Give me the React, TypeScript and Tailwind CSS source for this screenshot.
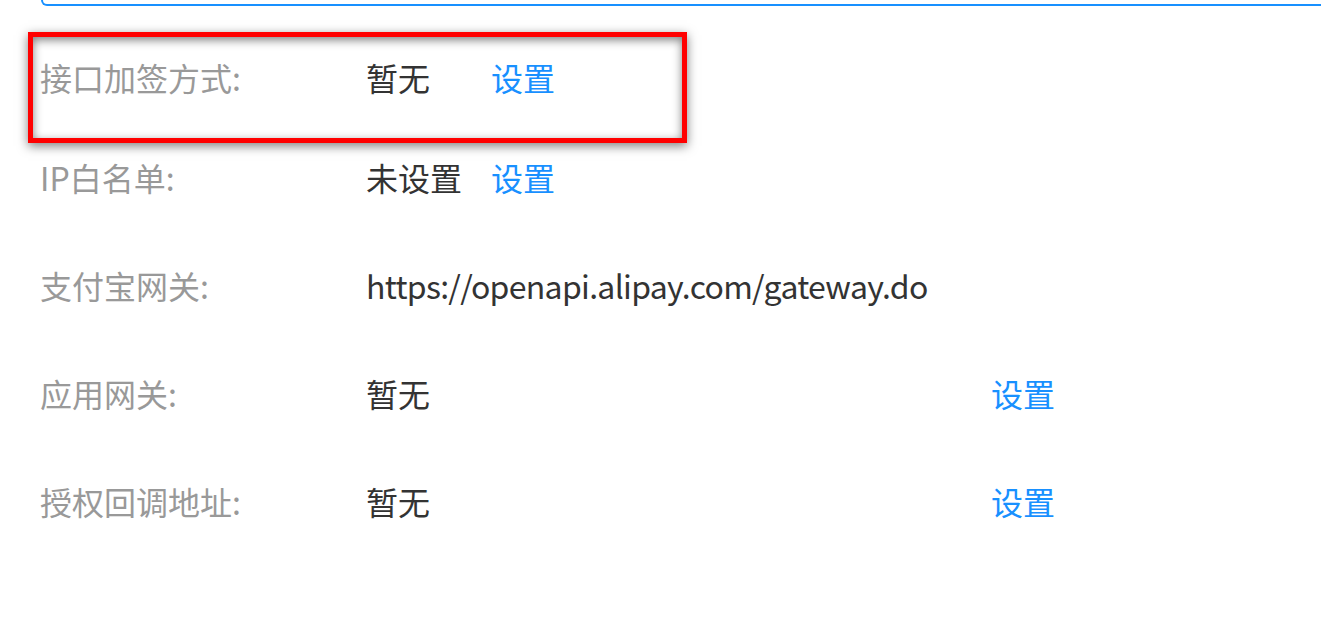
import React from "react";

const font = { fontFamily: '"Noto Sans CJK SC", "Noto Sans", sans-serif' };

type Row = { label: string; value: string; action?: string; wide?: boolean };

const rows: Row[] = [
  { label: "IP白名单:", value: "未设置", action: "设置" },
  { label: "支付宝网关:", value: "https://openapi.alipay.com/gateway.do" },
  { label: "应用网关:", value: "暂无", action: "设置", wide: true },
  { label: "授权回调地址:", value: "暂无", action: "设置", wide: true },
];

function Line({ row, first }: { row: Row; first?: boolean }) {
  return (
    <div
      className={`flex items-center text-[32px] leading-[40px] ${
        first ? "h-[92px]" : "h-[108px]"
      }`}
    >
      <span className="w-[326px] shrink-0 text-[#999999]">{row.label}</span>
      {row.wide ? (
        <span className="w-[625px] shrink-0 text-[#333333]">{row.value}</span>
      ) : row.action ? (
        <span className="w-[125px] shrink-0 text-[#333333]">{row.value}</span>
      ) : (
        <span className="text-[#333333] tracking-[-0.7px]">{row.value}</span>
      )}
      {row.action && (
        <a className="text-[#1890ff] cursor-pointer">{row.action}</a>
      )}
    </div>
  );
}

export default function App() {
  return (
    <div
      className="relative h-[626px] w-[1321px] overflow-hidden bg-white"
      style={font}
    >
      {/* bottom edge of the card above */}
      <div className="ml-[41px] -mr-4 h-[6px] rounded-b-lg border-2 border-t-0 border-[#1890ff]" />

      <div className="mt-[25px] pl-[40px]">
        <Line row={{ label: "接口加签方式:", value: "暂无", action: "设置" }} first />
        {rows.map((r) => (
          <Line key={r.label} row={r} />
        ))}
      </div>

      {/* red annotation box */}
      <div className="absolute left-[28px] top-[32px] h-[111px] w-[659px] border-[5px] border-[#ff0000] shadow-[0_3px_10px_rgba(0,0,0,0.5),inset_0_3px_10px_rgba(0,0,0,0.5)]" />
    </div>
  );
}
